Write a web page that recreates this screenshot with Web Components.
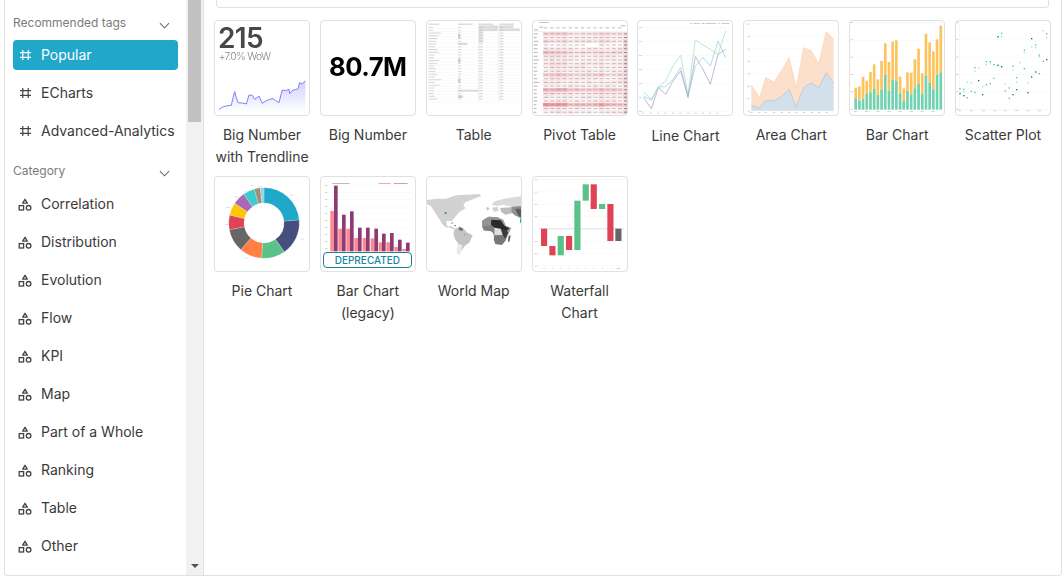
<!DOCTYPE html>
<html><head><meta charset="utf-8">
<style>
html,body{margin:0;padding:0;background:#fff;overflow:hidden;height:585px}
body{font-family:Inter,"Liberation Sans",sans-serif;font-size:14px;color:#3a3a3a}
</style></head>
<body>
<viz-gallery>
  <viz-sidebar slot="side">
    <side-head>Recommended tags</side-head>
    <side-item icon="hash" selected>Popular</side-item>
    <side-item icon="hash">ECharts</side-item>
    <side-item icon="hash">Advanced-Analytics</side-item>
    <side-head style="margin-bottom:1px">Category</side-head>
    <side-item icon="cat">Correlation</side-item>
    <side-item icon="cat">Distribution</side-item>
    <side-item icon="cat">Evolution</side-item>
    <side-item icon="cat">Flow</side-item>
    <side-item icon="cat">KPI</side-item>
    <side-item icon="cat">Map</side-item>
    <side-item icon="cat">Part of a Whole</side-item>
    <side-item icon="cat">Ranking</side-item>
    <side-item icon="cat">Table</side-item>
    <side-item icon="cat">Other</side-item>
  </viz-sidebar>
  <viz-tile chart="trend">Big Number with Trendline</viz-tile>
  <viz-tile chart="big">Big Number</viz-tile>
  <viz-tile chart="table">Table</viz-tile>
  <viz-tile chart="pivot">Pivot Table</viz-tile>
  <viz-tile chart="line" style="--label-top:9px">Line Chart</viz-tile>
  <viz-tile chart="area">Area Chart</viz-tile>
  <viz-tile chart="bar">Bar Chart</viz-tile>
  <viz-tile chart="scatter">Scatter Plot</viz-tile>
  <viz-tile chart="pie">Pie Chart</viz-tile>
  <viz-tile chart="legacy" deprecated>Bar Chart (legacy)</viz-tile>
  <viz-tile chart="map">World Map</viz-tile>
  <viz-tile chart="waterfall">Waterfall Chart</viz-tile>
</viz-gallery>
<script>
function rng(a){return function(){a|=0;a=a+0x6D2B79F5|0;var t=Math.imul(a^a>>>15,1|a);t=t+Math.imul(t^t>>>7,61|t)^t;return((t^t>>>14)>>>0)/4294967296}}
function R(x,y,w,h,f,o){return '<rect x="'+x+'" y="'+y+'" width="'+w+'" height="'+h+'" fill="'+f+'"'+(o!=null?' opacity="'+o+'"':'')+'/>'}
function pl(p,c,w){return '<polyline fill="none" stroke="'+c+'" stroke-width="'+(w||2)+'" stroke-linejoin="round" points="'+p.join(' ')+'"/>'}
function grid(ys,x1,x2,c){return ys.map(function(y){return R(x1,y,x2-x1,1.5,c||'#f1f1f1')}).join('')}
function ticks(xs,y,w,c){return xs.map(function(x){return R(x,y,w||7,2.5,c||'#ccc')}).join('')}
function yticks(x,ys,w){return ys.map(function(y){return R(x,y,w||8,2.5,'#ccc')}).join('')}
var charts={
 trend:{o:[13,62],d:function(){
  var p=[[28,330],[36,325],[42,322],[50,320],[58,319],[65,318],[70,295],[75,277],[80,295],[85,310],[98,311],[110,314],[114,300],[118,287],[128,288],[135,300],[142,295],[148,290],[153,302],[158,312],[168,305],[180,300],[190,298],[200,305],[208,310],[213,290],[218,272],[228,274],[238,270],[240,283],[250,272],[258,271],[265,268],[270,250],[278,253],[287,245]];
  return '<defs><linearGradient id="g" x1="0" y1="0" x2="0" y2="1"><stop offset="0" stop-color="#8a8aff" stop-opacity=".42"/><stop offset="1" stop-color="#8a8aff" stop-opacity="0"/></linearGradient></defs>'+
  '<polygon fill="url(#g)" points="28,335 '+p.join(' ')+' 287,335"/>'+pl(p,'#7d7dfa',3)+
  '<text x="25" y="145" font-size="84" font-weight="600" fill="#484848" letter-spacing="-2">215</text>'+
  '<text x="27" y="183" font-size="31" font-weight="300" fill="#888" letter-spacing="-2">+7.0% WoW</text>'}},
 big:{o:[331,62],d:function(){return '<text x="358" y="230" font-size="77" font-weight="700" fill="#000" letter-spacing="-1.5">80.7M</text>'}},
 table:{o:[649,62],d:function(){var r=rng(7),s='';
  s+=R(657,73,32,3,'#ccc')+R(745,73,44,3,'#ccc')+R(807,73,44,3,'#ccc')+R(869,73,44,3,'#ccc');
  s+=R(807,78,58,17,'#dcdcdc')+R(869,78,42,9,'#dcdcdc')+R(869,87,61,8,'#dcdcdc')+R(745,271,60,7,'#dcdcdc');
  s+=R(745,104,7,13,'#c8c8c8')+R(745,130,28,7,'#d8d8d8')+R(745,178,7,12,'#c8c8c8')+R(745,238,7,12,'#c8c8c8')+R(745,288,14,8,'#c8c8c8');
  s+=R(807,95,14,35,'#e4e4e4');
  for(var i=0;i<28;i++){var y=81+i*8.25;s+=R(655,y+6,276,1,'#f1f1f1');
   if(i<27){s+=R(657,y+2,12+r()*26,3,'#ccc',.8)+R(745,y+2,10,3,'#ccc',.7)+R(807,y+2,12,3,'#c0c0c0',.7)+R(869,y+2,12,3,'#c0c0c0',.7)}}
  s+=R(805,70,1.5,238,'#e8e8e8')+R(866,70,1.5,238,'#e8e8e8');return s}},
 pivot:{o:[22,62],d:function(){var r=rng(11),s='';
  s+=R(44,68,28,3,'#aaa',.7)+R(28,90,12,3,'#bbb')+R(44,82,12,3,'#bbb')+R(288,78,14,3,'#bbb');
  for(var c=0;c<13;c++)s+=R(55+c*18.5+3,84,10,3,'#aaa',.75);
  s+=R(24,97,284,1,'#ddd');
  var strong={0:.22,5:.3,11:.28,15:.42,19:.6,2:.16,8:.12,16:.16};
  for(var i=0;i<22;i++){var y=98+i*11.2;
   s+=R(27,y+4,8+r()*8,3,'#999',.75);
   for(var c=0;c<14;c++){var base=(strong[i]||.07)*(c<4?1:c==9?.9:.55)+r()*.12-(i==3?.1:0);
    if(c==13)base=.2+r()*.14;
    var x=55+c*18.5;
    s+=R(x,y,18.5,11.2,'#e7626b',Math.max(0,Math.min(.7,base)));
    if(!(i==3&&(c==7||c==8))) s+=R(x+3,y+4,c==13?14:12,3,c==13?'#777':'#999',c==13?.85:.6);
   }
   s+=R(24,y+11,284,.8,'#f3f3f3');}
  return s}},
 line:{o:[337,62],d:function(){
  var g=[[357,278],[380,300],[401,262],[423,245],[445,200],[468,168],[490,285],[512,122],[535,137],[557,150],[580,165],[603,95]],
  b=[[357,290],[380,303],[401,263],[423,262],[445,240],[468,205],[490,290],[512,200],[535,175],[557,200],[580,125],[603,175]],
  p=[[357,295],[380,328],[401,265],[423,285],[445,245],[468,215],[490,295],[512,172],[535,210],[557,255],[580,165],[603,150]];
  var ys=[83,125,167,209,251,293,335];
  return grid(ys,352,612,'#f4f4f4')+yticks(343,ys)+ticks([352,375,397,419,442,464,487,509,531,553,575],340)+
  R(495,72,8,2,'#8fd3e4')+R(506,71,20,3,'#ccc')+R(531,72,8,2,'#a8a6c8')+R(542,71,32,3,'#ccc')+R(578,72,8,2,'#a7e2c2')+R(590,71,24,3,'#ccc')+
  pl(g,'#a4e0c0',2.2)+pl(b,'#8fcfe3',2.2)+pl(p,'#a3a4c4',2.2)}},
 area:{o:[655,62],d:function(){
  var t=[[680,258],[705,295],[723,235],[748,248],[770,215],[793,175],[815,265],[837,145],[860,155],[882,193],[905,97],[927,120]],
  b=[[680,318],[705,326],[723,303],[748,304],[770,292],[793,270],[815,322],[837,265],[860,250],[882,265],[905,220],[927,252]];
  var ys=[73,110,148,185,222,260,297,334];
  return grid(ys,680,928,'#f4f4f4')+yticks(668,ys)+ticks([677,700,720,745,768,790,812,835,858,880,902],338)+
  '<polygon fill="#fde0cb" points="'+t.join(' ')+' '+b.slice().reverse().join(' ')+'"/>'+
  '<polygon fill="#d3e0ec" points="680,334 '+b.join(' ')+' 927,334"/>'+pl(t,'#fbc9a3',1.8)+pl(b,'#9fbbd5',1.8)}},
 bar:{o:[28,62],d:function(){
  var g=[297,303,298,284,279,267,287,270,227,274,240,245,282,305,275,285,267,252,283,230,250,270,227,219],
  o=[265,261,232,244,218,195,240,185,132,188,126,123,232,267,219,220,180,148,222,103,129,156,120,79],s='';
  s+=grid([70,122,174,226,278],42,308,'#f2f2f2')+yticks(32,[68,120,172,224,276,328])+ticks([42,76,110,143,176,210,243,275],335,10);
  for(var i=0;i<24;i++){var x=44+i*11.1;s+=R(x,o[i],8,g[i]-o[i],'#fdc45d')+R(x,g[i],8,331-g[i],'#70d2ae')}
  return s}},
 scatter:{o:[347,62],d:function(){
  var c='#35c7c9',d='#0b6f80',m='#8ff0b5',t='#5cb8c4';
  var pts=[[362,268,c],[362,283,d],[373,270,c],[373,278,m],[374,289,d],[384,295,t],[384,248,m],[396,250,m],[396,276,t],[407,279,t],[407,205,t],[407,215,m],[418,207,m],[418,244,d],[430,286,d],[430,262,m],[441,187,t],[441,196,m],[441,256,t],[453,187,t],[453,193,m],[453,253,t],[464,196,t],[464,237,t],[476,198,d],[476,112,d],[476,115,m],[487,102,c],[487,112,m],[487,202,d],[498,255,m],[498,275,t],[510,266,c],[510,297,t],[521,200,t],[521,213,m],[521,286,d],[532,235,t],[532,248,m],[532,271,d],[543,190,m],[555,153,t],[555,160,m],[555,208,t],[566,250,m],[566,280,d],[577,118,d],[577,142,m],[577,233,d],[589,137,t],[589,145,m],[589,218,d],[600,167,t],[600,172,m],[600,223,t],[612,94,m],[612,186,t],[622,103,t],[622,115,m],[622,181,d]];
  return grid([121,173,225,277,329],358,628,'#f3f3f3')+yticks(350,[68,120,172,224,276,328])+ticks([356,392,428,462,494,528,562,596],333,9)+
  R(360,68,1.2,262,'#eee')+pts.map(function(p){return R(p[0]-2,p[1]-2,4,4,p[2])}).join('')}},
 pie:{o:[13,19],d:function(){
  var cx=163,cy=160,ro=106,ri=60,s='';
  var seg=[[0,85,'#1FA8C9'],[85,145,'#454E7C'],[145,184,'#5AC189'],[184,221,'#FF7F44'],[221,259,'#666666'],[259,283,'#E04355'],[283,304,'#FCC700'],[304,325,'#A868B7'],[325,344,'#3CCCCB'],[344,354,'#A38F79'],[354,360,'#8FD3E4']];
  function P(r,a){a=a*Math.PI/180;return (cx+r*Math.sin(a)).toFixed(1)+' '+(cy-r*Math.cos(a)).toFixed(1)}
  seg.forEach(function(g){var big=g[1]-g[0]>180?1:0;
   s+='<path fill="'+g[2]+'" stroke="#fff" stroke-width=".6" d="M'+P(ro,g[0])+'A'+ro+' '+ro+' 0 '+big+' 1 '+P(ro,g[1])+'L'+P(ri,g[1])+'A'+ri+' '+ri+' 0 '+big+' 0 '+P(ri,g[0])+'Z"/>'});
  [[240,75],[272,207],[104,264],[46,163],[50,112],[73,80],[105,65],[122,46],[145,50]].forEach(function(q){s+=R(q[0],q[1],12,2.5,'#ddd')});
  return s}},
 legacy:{o:[331,19],d:function(){
  var pk=[[362,124],[386,177],[410,177],[434,205],[459,205],[483,206],[507,218],[530,218],[554,232],[578,238]],
  pu=[[373,48],[397,135],[421,125],[445,174],[469,174],[494,177],[517,192],[541,190],[565,210],[589,219]],s='';
  var ys=[];for(var i=0;i<10;i++)ys.push(46+i*21);
  s+=grid(ys,358,606,'#f3f3f3')+yticks(345,ys);
  s+=R(368,40,52,3,'#bbb')+R(507,40,36,3,'#f4a8a8')+R(552,40,42,3,'#c9a0bd');
  pk.forEach(function(b){s+=R(b[0],b[1],11,245-b[1],'#f98a8f')});
  pu.forEach(function(b){s+=R(b[0],b[1],11,245-b[1],'#8e3a75')});
  return s}},
 map:{o:[0,0],d:function(){
  var L='#d2d2d2',D='#6d6d6d',K='#2a2a2a',F='#e9e9e9';
  function P(f,p){return '<polygon fill="'+f+'" points="'+p+'"/>'}
  var s='';
  s+=P(L,'3,72 30,68 60,68 90,58 160,54 166,60 135,72 118,78 112,88 118,97 100,108 88,122 78,135 62,135 60,150 48,142 35,122 22,102 14,90 3,85');
  s+=P('#c8c8c8','48,142 60,138 62,150 78,158 88,158 78,152 70,150 65,156 55,150');
  s+=P('#c4c4c4','85,160 100,152 112,158 125,170 140,178 130,200 118,208 108,222 100,205 88,192 82,175');
  s+=P(D,'100,152 112,158 108,165 98,162');
  s+=P(F,'100,205 110,208 106,228 100,237 92,232 92,215');
  s+=P('#dadada','197,86 205,76 235,68 288,60 288,92 255,92 232,86 212,90');
  s+=P('#c9c9c9','180,96 186,92 190,100 184,104')+P('#d2d2d2','198,95 215,92 218,104 204,108');
  s+=P('#bcbcbc','222,96 256,94 258,112 238,116 226,108');
  s+=P('#909090','256,92 288,90 288,130 276,122 266,118 256,108');
  s+=P('#5c5c5c','268,98 288,98 288,126 276,118');
  s+=P('#999','168,135 188,122 214,124 232,132 240,150 256,156 240,190 228,206 208,204 203,178 198,166 172,163');
  s+=P('#949494','170,132 188,122 214,124 232,132 226,140 205,142 182,152 168,152');
  s+=P(K,'196,131 224,133 236,150 250,156 240,168 222,160 200,156 195,145');
  s+=P('#808080','168,152 195,148 208,156 205,172 195,166 174,163');
  s+=P('#3c3c3c','224,160 241,162 246,170 238,190 230,178 224,172');
  s+=P('#dedede','205,155 224,158 230,176 206,178');
  s+=P('#777','206,178 230,178 240,192 228,206 208,204 203,190');
  s+=P('#555','248,180 254,178 250,198 246,196');
  s+=P('#38a4a6','56,108 62,108 62,114 56,114')+P('#4da9ab','113,174 117,174 117,178 113,178')+P('#2ba7a8','282,128 288,128 288,140 282,140')+P('#8cb9bb','94,203 97,203 97,206 94,206');
  s+=P('#777','85,147 90,147 90,150 85,150')+P('#aaa','75,140 82,138 82,142 75,144');
  return s}},
 waterfall:{o:[337,19],d:function(){
  var G='#5AC189',Re='#E04355',Y='#666';
  var b=[[364,177,229,Re],[389,229,257,Re],[414,199,257,G],[439,199,241,Re],[464,93,241,G],[489,44,93,G],[513,44,118,Re],[538,103,118,G],[563,103,214,Re],[587,177,214,Y]];
  var ys=[29,66,103,140,214,251,288],s=grid(ys,358,612,'#f3f3f3')+yticks(345,ys)+R(358,177,254,1.5,'#bbb');
  s+=ticks([372,397,422,447,472,497,522,547,572],295,3)+R(591,295,11,2.5,'#ccc');
  b.forEach(function(q){s+=R(q[0],q[1],18.5,q[2]-q[1],q[3])});return s}}
};

customElements.define('viz-thumb',class extends HTMLElement{
 connectedCallback(){
  var c=charts[this.getAttribute('chart')];
  var s=this.attachShadow({mode:'open'});
  var ox=c.o[0]+3,oy=c.o[1]+3;
  s.innerHTML='<style>:host{display:block;box-sizing:border-box;width:96px;height:96px;border:1px solid #e0e0e0;border-radius:4px;overflow:hidden;background:#fff}svg{display:block;width:94px;height:94px;font-family:Inter,"Liberation Sans",sans-serif;filter:blur(.3px)}</style>'+
  '<svg viewBox="'+ox+' '+oy+' 282 282" xmlns="http://www.w3.org/2000/svg">'+c.d()+'</svg>';
 }});

customElements.define('dep-badge',class extends HTMLElement{
 constructor(){super();this.attachShadow({mode:'open'}).innerHTML='<style>:host{position:absolute;left:3px;right:4px;bottom:4px;height:16px;box-sizing:border-box;background:#fff;border:1.5px solid #1b7f9c;border-radius:4px;display:flex;align-items:center;justify-content:center;font:500 10px/1 Inter,"Liberation Sans",sans-serif;color:#1a85a0}</style><slot></slot>'}
});

customElements.define('viz-tile',class extends HTMLElement{
 connectedCallback(){
  var s=this.attachShadow({mode:'open'});
  s.innerHTML='<style>:host{display:block;width:96px;font:14px/22px Inter,"Liberation Sans",sans-serif;color:#3a3a3a;text-align:center}.w{position:relative;width:96px;height:96px}.l{margin:var(--label-top,8px) 0 0}</style>'+
  '<div class="w"><viz-thumb chart="'+this.getAttribute('chart')+'"></viz-thumb>'+(this.hasAttribute('deprecated')?'<dep-badge>DEPRECATED</dep-badge>':'')+'</div><div class="l"><slot></slot></div>';
 }});

customElements.define('side-head',class extends HTMLElement{
 constructor(){super();this.attachShadow({mode:'open'}).innerHTML='<style>:host{display:flex;align-items:center;justify-content:space-between;height:34px;margin:0 16px 0 8px;font:12px/16px Inter,"Liberation Sans",sans-serif;color:#7b7b7b}svg{width:11px;height:7px;margin-top:5px;fill:none;stroke:#666;stroke-width:1.1}</style><slot></slot><svg viewBox="0 0 12 7"><path d="M1 1l5 5 5-5"/></svg>'}
});

customElements.define('side-item',class extends HTMLElement{
 connectedCallback(){
  var ic=this.getAttribute('icon')==='hash'
   ?'<svg viewBox="0 0 11 12" style="width:11px;height:12px;margin-left:2px"><path d="M2.8 1v10M8.2 1v10M0 3.7h11M0 8.3h11" fill="none" stroke="currentColor" stroke-width="1.2"/></svg>'
   :'<svg viewBox="0 0 14 13" style="width:14px;height:13px"><path d="M7 1.3L9.3 5.2H4.7Z" fill="none" stroke="currentColor" stroke-width="1.3" stroke-linejoin="round"/><rect x="1.2" y="7.6" width="4.4" height="4.4" fill="none" stroke="currentColor" stroke-width="1.3"/><circle cx="10.6" cy="9.8" r="2.3" fill="none" stroke="currentColor" stroke-width="1.3"/></svg>';
  this.attachShadow({mode:'open'}).innerHTML='<style>:host{display:flex;align-items:center;height:30px;margin:0 8px 8px;padding-left:5px;border-radius:4px;font:14px/22px Inter,"Liberation Sans",sans-serif;color:#3a3a3a;white-space:nowrap}:host([selected]){background:#20a7c9;color:#fff}span{display:flex;width:23px;flex:none;box-sizing:border-box}svg{display:block;color:#444}:host([selected]) svg{color:#fff}</style><span>'+ic+'</span><slot></slot>';
 }});

customElements.define('viz-sidebar',class extends HTMLElement{
 constructor(){super();this.attachShadow({mode:'open'}).innerHTML='<style>:host{display:flex;flex:none;height:100%;border-right:1px solid #e0e0e0;overflow:hidden}.list{width:181px;padding-top:6px;box-sizing:border-box}.track{width:17px;background:#f1f1f1;display:flex;flex-direction:column;align-items:center;justify-content:space-between}.thumb{width:13px;height:122px;background:#c1c1c1}.arrow{width:0;height:0;border:4px solid transparent;border-top:4px solid #505050;border-bottom:0;margin-bottom:7px}</style><div class="list"><slot></slot></div><div class="track"><div class="thumb"></div><div class="arrow"></div></div>'}
});

customElements.define('viz-gallery',class extends HTMLElement{
 constructor(){super();this.attachShadow({mode:'open'}).innerHTML='<style>:host{display:flex;box-sizing:border-box;height:576px;margin-left:4px;border:1px solid #e0e0e0;border-top:0;border-radius:0 0 4px 4px;overflow:hidden;background:#fff}.main{flex:1;padding-left:10px;min-width:0}.search{height:8px;box-sizing:border-box;margin:0 12px 12px 2px;border:1px solid #e0e0e0;border-top:0;border-radius:0 0 4px 4px}.grid{display:grid;grid-template-columns:repeat(8,96px);column-gap:9.86px;row-gap:8px;align-items:start}</style><slot name="side"></slot><div class="main"><div class="search"></div><div class="grid"><slot></slot></div></div>'}
});
</script>
</body></html>
